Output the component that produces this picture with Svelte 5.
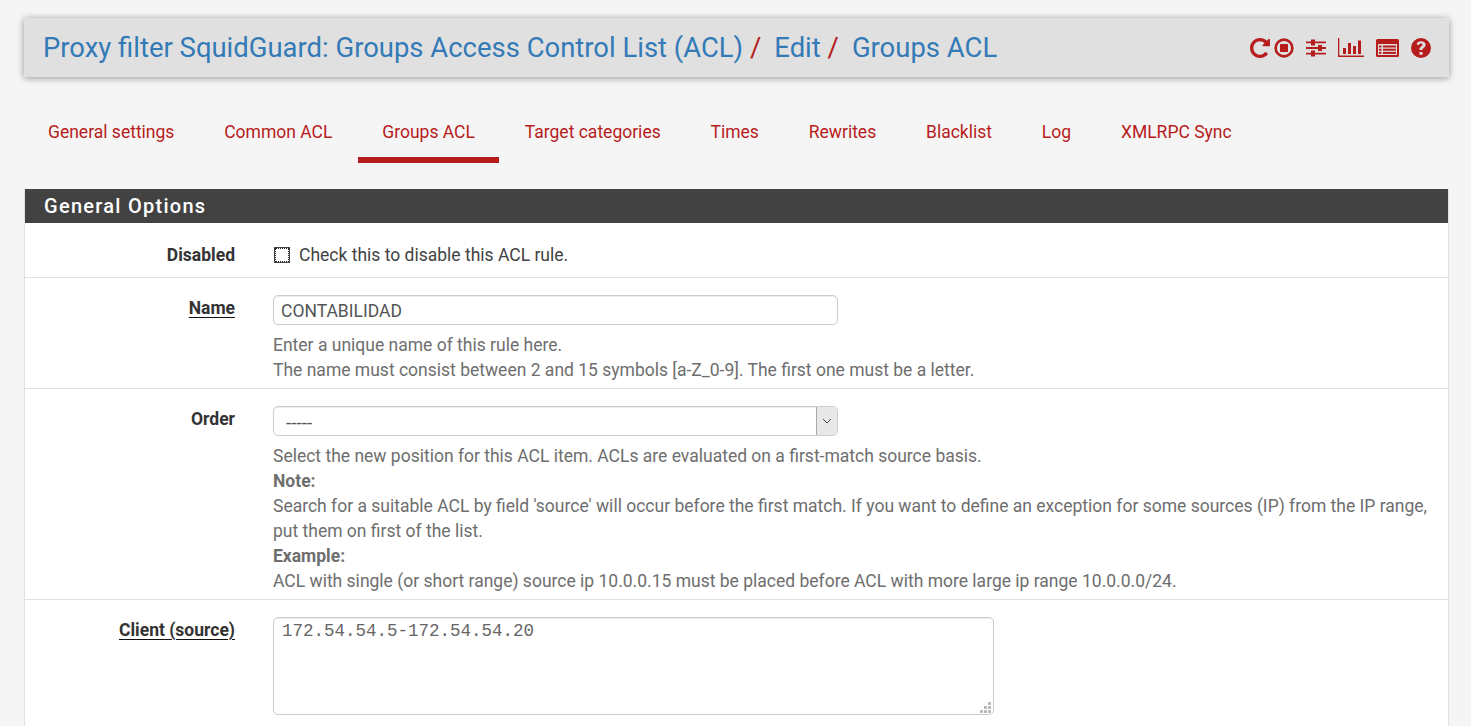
<script>
	const tabs = [
		'General settings',
		'Common ACL',
		'Groups ACL',
		'Target categories',
		'Times',
		'Rewrites',
		'Blacklist',
		'Log',
		'XMLRPC Sync'
	];
</script>

<div class="page">
	<header class="titlebar">
		<h1>
			<a href="#top">Proxy filter SquidGuard: Groups Access Control List (ACL)</a>
			<span class="sep">/</span>
			<a href="#top">Edit</a>
			<span class="sep">/</span>
			<a href="#top">Groups ACL</a>
		</h1>
		<div class="icons">
			<svg class="ic-reload" viewBox="0 0 1536 1536" width="20" height="20">
				<path transform="translate(0 1408) scale(1 -1)" d="M1536 1280v-448q0-26-19-45t-45-19h-448q-42 0-59 40-17 39 14 69l138 138q-148 137-349 137-104 0-198.500-40.500t-163.500-109.500-109.500-163.500-40.500-198.500 40.500-198.500 109.500-163.500 163.500-109.500 198.500-40.500q119 0 225 52t179 147q7 10 23 12 15 0 25-9l137-138q9-8 9.500-20.500t-7.500-22.500q-109-132-264-204.500t-327-72.500q-156 0-298 61t-245 164-164 245-61 298 61 298 164 245 245 164 298 61q147 0 284.500-55.500t244.500-156.500l130 129q29 31 70 14 39-17 39-59z" />
			</svg>
			<svg class="ic-stop" viewBox="0 0 20 20" width="20" height="20">
				<circle cx="10" cy="10" r="8.4" fill="none" stroke-width="2.6" />
				<rect x="6" y="6" width="8" height="8" rx="0.6" />
			</svg>
			<svg class="ic-sliders" viewBox="0 0 20 18" width="20" height="18">
				<path d="M0 2.500h20v1.800H0zM0 8.100h20v1.800H0zM0 13.700h20v1.800H0z" />
				<rect x="5" y="0.500" width="4" height="6" />
				<rect x="12" y="6" width="4" height="6" />
				<rect x="5" y="11.500" width="4" height="6" />
			</svg>
			<svg class="ic-chart" viewBox="0 0 26 19" width="26" height="19">
				<path d="M0 0h1.300v17.600H26V19H0z" />
				<rect x="5" y="10" width="3" height="6" />
				<rect x="10" y="5" width="3" height="11" />
				<rect x="15" y="8" width="3" height="8" />
				<rect x="20" y="2.500" width="3" height="13.500" />
			</svg>
			<svg class="ic-list" viewBox="0 0 23 18" width="23" height="18">
				<path fill-rule="evenodd" d="M1.500 0h20A1.500 1.500 0 0 1 23 1.500v15a1.500 1.500 0 0 1-1.500 1.500h-20A1.500 1.500 0 0 1 0 16.500v-15A1.500 1.500 0 0 1 1.500 0zM2 5v11h19V5z" />
				<rect x="3" y="6.500" width="2.500" height="2" />
				<rect x="3" y="9.700" width="2.500" height="2" />
				<rect x="3" y="12.900" width="2.500" height="2" />
				<rect x="7" y="6.500" width="13" height="2" />
				<rect x="7" y="9.700" width="13" height="2" />
				<rect x="7" y="12.900" width="13" height="2" />
			</svg>
			<svg class="ic-help" viewBox="0 0 20 20" width="20" height="20">
				<path fill-rule="evenodd" d="M10 0a10 10 0 1 1 0 20a10 10 0 0 1 0-20zM8.500 14v2.800h3V14zM10 3.200c-2.400 0-3.900 1.200-4.400 3l2.300 1c.3-1 1-1.600 2-1.600.9 0 1.600.5 1.600 1.200 0 .8-.6 1.100-1.300 1.600-1 .7-1.700 1.400-1.700 2.800v.8h3v-.6c0-.7.3-1 1-1.500 1-.7 2.100-1.500 2.100-3.200 0-2.200-1.900-3.500-4.600-3.500z" />
			</svg>
		</div>
	</header>

	<nav class="tabs">
		{#each tabs as tab}
			<a href="#top" class:active={tab === 'Groups ACL'}>{tab}</a>
		{/each}
	</nav>

	<section class="panel">
		<h2>General Options</h2>

		<div class="row row-disabled">
			<span class="label">Disabled</span>
			<div class="field">
				<label class="check">
					<input type="checkbox" />
					Check this to disable this ACL rule.
				</label>
			</div>
		</div>

		<div class="row">
			<span class="label"><u>Name</u></span>
			<div class="field">
				<input class="text" type="text" value="CONTABILIDAD" />
				<p class="help">
					Enter a unique name of this rule here.<br />
					The name must consist between 2 and 15 symbols [a-Z_0-9]. The first one must be a letter.
				</p>
			</div>
		</div>

		<div class="row">
			<span class="label">Order</span>
			<div class="field">
				<div class="select">
					<select>
						<option>-----</option>
					</select>
					<span class="arrow">
						<svg viewBox="0 0 10 6" width="10" height="6"><path d="M1 1l4 4 4-4" /></svg>
					</span>
				</div>
				<p class="help">
					Select the new position for this ACL item. ACLs are evaluated on a first-match source basis.<br />
					<b>Note:</b><br />
					Search for a suitable ACL by field 'source' will occur before the first match. If you want to define an exception for some sources (IP) from the IP range, put them on first of the list.<br />
					<b>Example:</b><br />
					ACL with single (or short range) source ip 10.0.0.15 must be placed before ACL with more large ip range 10.0.0.0/24.
				</p>
			</div>
		</div>

		<div class="row row-last">
			<span class="label"><u>Client (source)</u></span>
			<div class="field">
				<div class="area">
					<textarea rows="4">172.54.54.5-172.54.54.20</textarea>
					<svg class="grip" viewBox="0 0 11 11" width="11" height="11">
						<path d="M8 0h3v3H8zM4 4h3v3H4zM8 4h3v3H8zM0 8h3v3H0zM4 8h3v3H4zM8 8h3v3H8z" />
					</svg>
				</div>
			</div>
		</div>
	</section>
</div>

<style>
	:global(body) {
		margin: 0;
		background: #f5f5f5;
		overflow: hidden;
		font-family: Roboto, 'Liberation Sans', sans-serif;
		font-size: 17.5px;
		line-height: 25px;
		color: #212121;
	}

	.page {
		height: 726px;
		overflow: hidden;
		padding: 18px 22px 0 24px;
		box-sizing: border-box;
	}

	.titlebar {
		height: 59px;
		background: #e0e0e0;
		box-shadow: 0 1px 7px rgba(0, 0, 0, 0.4);
		display: flex;
		align-items: center;
		justify-content: space-between;
		padding: 0 18px 0 19px;
	}

	h1 {
		margin: 0;
		font-size: 27.45px;
		font-weight: 400;
		line-height: 60px;
		color: #b71c1c;
		white-space: nowrap;
	}

	h1 a {
		color: #337ab7;
		text-decoration: none;
	}

	.sep {
		padding: 0 6.2px 0 0;
	}

	.icons {
		display: flex;
		align-items: center;
		gap: 12px;
	}

	.icons svg {
		fill: #b71c1c;
		display: block;
	}

	.icons .ic-stop {
		margin-left: -8px;
	}

	.ic-stop circle {
		stroke: #b71c1c;
	}

	.tabs {
		display: flex;
		gap: 1.85px;
		margin-top: 24px;
		height: 62px;
		box-sizing: border-box;
	}

	.tabs a {
		padding: 19px 24px 0;
		color: #b71c1c;
		text-decoration: none;
		font-size: 17.5px;
		border-bottom: 6px solid transparent;
	}

	.tabs a.active {
		border-bottom-color: #b71c1c;
	}

	.panel {
		margin-top: 26px;
		background: #fff;
		border-left: 1px solid #e0e0e0;
		border-right: 1px solid #e0e0e0;
	}

	h2 {
		margin: 0;
		height: 34px;
		background: #424242;
		color: #fff;
		font-size: 20px;
		font-weight: 500;
		letter-spacing: 1.27px;
		line-height: 34px;
		padding-left: 19px;
	}

	.row {
		display: grid;
		grid-template-columns: 210px 1fr;
		column-gap: 38px;
		padding: 17px 15px 5px 0;
		border-top: 1px solid #e0e0e0;
	}

	.row-disabled {
		padding: 20px 15px 9px 0;
		border-top: 0;
	}

	.row-last {
		padding-bottom: 40px;
	}

	.label {
		text-align: right;
		font-weight: 700;
		color: #333;
		padding-top: 1px;
	}

	.row-disabled .label {
		padding-top: 0;
	}

	.label u {
		text-underline-offset: 3px;
		text-decoration-color: #111;
	}

	.field {
		min-width: 0;
		color: #424242;
	}

	.check {
		display: flex;
		align-items: center;
		gap: 9px;
	}

	.check input {
		appearance: none;
		width: 16px;
		height: 16px;
		margin: -1px 0 0 1px;
		box-sizing: border-box;
		background: #fff;
		border: 1px solid #444;
		outline: 1px dotted #222;
		outline-offset: -2px;
	}

	.text {
		display: block;
		width: 565px;
		height: 30px;
		box-sizing: border-box;
		padding: 1px 7px 0;
		border: 1px solid #ccc;
		border-radius: 5px;
		font: inherit;
		color: #555;
		box-shadow: inset 0 1px 1px rgba(0, 0, 0, 0.075);
	}

	.select {
		position: relative;
		width: 565px;
		height: 30px;
	}

	.select select {
		appearance: none;
		display: block;
		width: 100%;
		height: 100%;
		box-sizing: border-box;
		padding: 2px 12px 0;
		border: 1px solid #ccc;
		border-radius: 5px;
		background: #fff;
		font: inherit;
		font-size: 19px;
		color: #555;
		box-shadow: inset 0 1px 1px rgba(0, 0, 0, 0.075);
	}

	.arrow {
		position: absolute;
		top: 1px;
		right: 1px;
		bottom: 1px;
		width: 20px;
		display: flex;
		align-items: center;
		justify-content: center;
		background: #e8e8e8;
		border-left: 1px solid #aaa;
		border-radius: 0 4px 4px 0;
		pointer-events: none;
	}

	.arrow svg path {
		fill: none;
		stroke: #444;
		stroke-width: 1;
	}

	.help {
		margin: 8px 0 0;
		color: #6e6e6e;
	}

	.help b {
		font-weight: 700;
	}

	.area {
		position: relative;
		width: 721px;
	}

	textarea {
		display: block;
		width: 100%;
		height: 98px;
		box-sizing: border-box;
		padding: 2px 8px;
		border: 1px solid #ccc;
		border-radius: 5px;
		font-family: 'Liberation Mono', monospace;
		font-size: 17.5px;
		line-height: 22px;
		color: #666;
		box-shadow: inset 0 1px 1px rgba(0, 0, 0, 0.075);
		resize: none;
	}

	.grip {
		position: absolute;
		right: 3px;
		bottom: 2px;
		fill: #bbb;
	}
</style>
